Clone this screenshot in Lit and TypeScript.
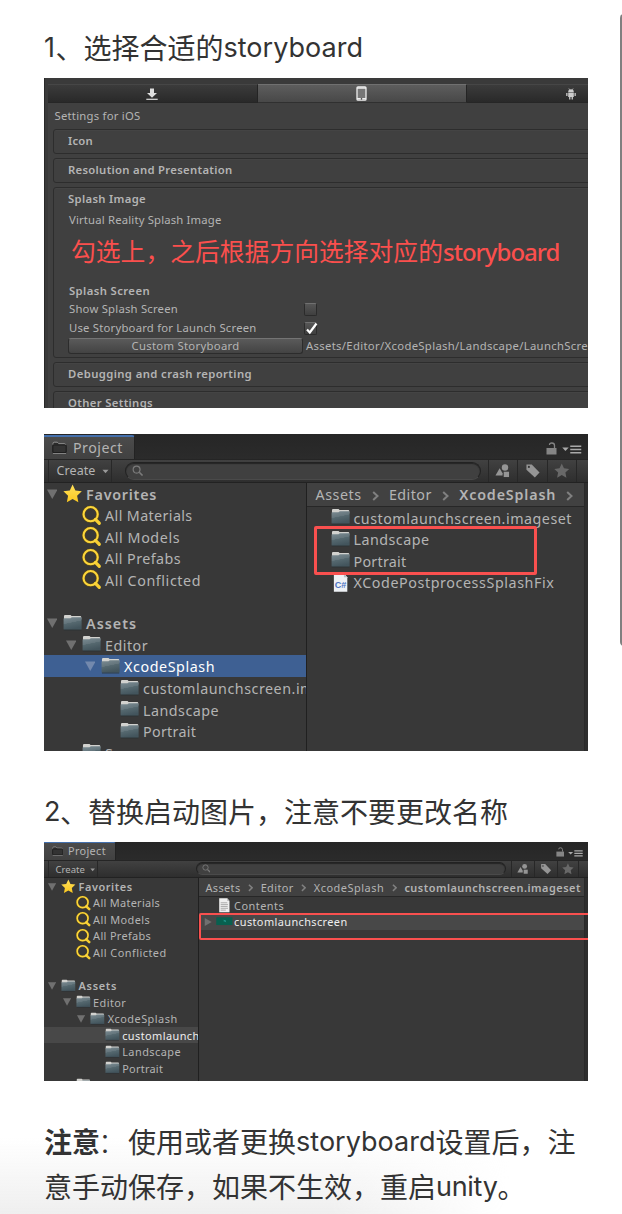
import { LitElement, html, css, nothing } from "lit";
import { customElement, property } from "lit/decorators.js";

/* Text whose letter spacing is adjusted so that it fills a known width. */
@customElement("fit-text")
class FitText extends LitElement {
  @property({ type: Number }) w = 0;
  @property() text = "";
  static styles = css`
    :host { display: inline-block; white-space: nowrap; flex: none; }
    .t { display: inline-block; white-space: pre; }
  `;
  render() {
    return html`<span class="t">${this.text}</span>`;
  }
  updated() {
    const el = this.renderRoot.querySelector(".t") as HTMLElement;
    if (!this.w || !el || this.text.length < 2) return;
    el.style.letterSpacing = "0px";
    const natural = el.getBoundingClientRect().width;
    el.style.letterSpacing = `${(this.w - natural) / this.text.length}px`;
  }
}

const t = (text: string, w: number, cls = "") => html`<fit-text class=${cls} .text=${text} .w=${w + 1}></fit-text>`;

const folder = () => html`<svg class="ico" viewBox="0 0 20 17">
  <defs><linearGradient id="f" x1="0" y1="0" x2="0.3" y2="1"><stop offset="0" stop-color="#7d8d94" /><stop offset="0.5" stop-color="#64757c" /><stop offset="0.52" stop-color="#566970" /><stop offset="1" stop-color="#43555d" /></linearGradient></defs>
  <path d="M1 4V2Q1 .6 2.200.6H7.600Q8.400.6 8.800 1.600H18Q19 1.600 19 2.600V5H1Z" fill="#d2d2cf" />
  <path d="M.6 4.800Q.6 4 1.400 4H7.800L9.200 2.800H18.600Q19.400 2.800 19.400 3.600V15.200Q19.400 16 18.600 16H1.400Q.6 16 .6 15.200Z" fill="url(#f)" />
  <path d="M1 16.300H19" stroke="#293034" stroke-width=".7" />
</svg>`;

const search = () => html`<svg class="ico sq" viewBox="0 0 20 20">
  <circle cx="9" cy="8.500" r="7.400" fill="none" stroke="#6b5310" stroke-width="3.200" />
  <path d="M14 14L18 18" stroke="#f8cf33" stroke-width="3.400" stroke-linecap="round" />
  <circle cx="9" cy="8.500" r="7.400" fill="none" stroke="#fbd63c" stroke-width="2.200" />
</svg>`;

const starPath = "M10 .6L12.900 6.800L19.600 7.600L14.700 12.200L16 19L10 15.600L4 19L5.300 12.200L.4 7.600L7.100 6.800Z";
const star = () => html`<svg class="ico sq" viewBox="0 0 20 20">
  <defs><linearGradient id="s" x1="0" y1="0" x2="0" y2="1"><stop offset="0" stop-color="#ffe05a" /><stop offset="1" stop-color="#fbc820" /></linearGradient></defs>
  <path d=${starPath} fill="url(#s)" />
</svg>`;

const tri = (open: boolean) => html`<svg class="tri" viewBox="0 0 11 11">
  <path d=${open ? "M0 .5H11L5.500 10.500Z" : "M1 0V11L10.500 5.500Z"} fill="currentColor" />
</svg>`;

const csFile = () => html`<svg class="ico sq" viewBox="0 0 20 20">
  <path d="M3 .5H13.500L17 4.500V19.500H3Z" fill="#eef1f5" />
  <path d="M13.500 .5V4.500H17Z" fill="#b9c0c8" />
  <text x="3.800" y="15.200" font-family="Liberation Sans" font-size="9.500" font-weight="700" fill="#4d74c4">C#</text>
</svg>`;

const docFile = () => html`<svg class="ico sq" viewBox="0 0 20 20">
  <path d="M3 .5H14L17 4V19.500H3Z" fill="#efefef" />
  <path d="M14 .5V4H17Z" fill="#b5b5b5" />
  <path d="M5 6.500H14M5 9H15M5 11.500H14.500M5 14H15M5 16.500H12" stroke="#888" stroke-width=".9" />
</svg>`;

const thumb = () => html`<svg class="ico sq" viewBox="0 0 20 20">
  <rect x="-1" y="4.500" width="22" height="10.500" fill="#08604f" />
  <path d="M9 8L12 11M11.500 8.500L10 10" stroke="#2aa7a0" stroke-width="1.200" />
</svg>`;

const icons: Record<string, () => unknown> = { folder, search, star, cs: csFile, doc: docFile, thumb };

interface Row {
  text: string; w: number; icon?: string; level?: number; open?: boolean; closed?: boolean; bold?: boolean; state?: string;
}
interface Project {
  title: number; create: number; tree: Row[]; crumbs: [string, number][]; files: Row[];
}

@customElement("project-window")
class ProjectWindow extends LitElement {
  @property({ attribute: false }) data!: Project;
  static styles = css`
    :host {
      display: block; position: relative; overflow: hidden; background: #383838; color: #b4b4b4;
      font-family: "Noto Sans", "Open Sans", sans-serif; --unit: 10px; font-size: var(--unit);
    }
    svg { display: block; flex: none; }
    .frame { height: 100%; display: flex; flex-direction: column; }
    .head { height: var(--head); flex: none; background: linear-gradient(#262626, #2b2b2b); display: flex; justify-content: space-between; align-items: flex-end; }
    .tab {
      height: calc(var(--head) - var(--tabtop)); width: var(--tabw); box-sizing: border-box; border-top: var(--blue) solid #4470ad;
      border-right: 1px solid #232323; border-radius: 0 .3em 0 0; background: linear-gradient(#4b4b4b, #414141);
      display: flex; align-items: center; padding-left: var(--tabpad); gap: var(--tabgap);
    }
    .tab svg { width: 1.5em; height: 1.3em; margin-top: -.15em; }
    .name { font-size: 1.42em; line-height: 1; }
    .menu { display: flex; align-items: center; gap: .55em; padding: 0 .65em calc(var(--head) * .15) 0; }
    .menu .lock { width: 1.1em; height: 1.3em; }
    .menu .list { width: 1.95em; height: .9em; margin-top: .2em; }
    .tools { height: var(--tools); flex: none; box-sizing: border-box; background: linear-gradient(#414141, #2e2e2e); border-top: 1px solid #252525; border-bottom: 1px solid #222; display: flex; }
    .create { width: var(--createw); margin-left: 4px; border-left: 1px solid #282828; border-right: 1px solid #282828; box-sizing: border-box; display: flex; align-items: center; gap: .6em; padding-left: var(--createpad); }
    .create .lbl { font-size: 1.25em; line-height: 1; padding-top: .14em; }
    .create svg { width: .7em; height: .5em; margin-top: .2em; }
    .field { margin: .15em 0 .2em var(--fieldx); width: var(--fieldw); box-sizing: border-box; border-radius: 2em; background: #404040; border: 1px solid #222; border-bottom-color: #4a4a4a; box-shadow: inset 0 1px 1px #252525; display: flex; align-items: center; padding-left: .6em; }
    .field svg { width: 1.15em; height: 1.15em; }
    .btns { margin-left: .65em; display: flex; }
    .btns span { width: 2.98em; box-sizing: border-box; border-left: 1px solid #272727; display: flex; align-items: center; justify-content: center; }
    .btns span:last-child { border-right: 1px solid #272727; }
    .btns svg { width: 1.55em; height: 1.55em; }
    .body { flex: 1; min-height: 0; display: flex; }
    .tree { width: var(--treew); flex: none; overflow: hidden; border-right: 1px solid #202020; box-sizing: border-box; }
    .row { height: var(--row); display: flex; align-items: center; box-sizing: border-box; overflow: hidden; }
    .tree .row { padding-left: var(--lead); }
    .pad { width: 1.9em; flex: none; }
    .slot { width: 1.66em; flex: none; }
    .tri { width: 1.05em; height: 1.05em; color: #707070; margin-top: .1em; }
    .ico { width: 1.92em; height: 1.72em; margin-right: .38em; margin-top: -.1em; overflow: visible; }
    .sq { height: 1.92em; margin-top: .05em; }
    .text { font-size: 1.43em; line-height: 1; padding-top: .2em; }
    .bold { font-weight: 600; }
    .blue { background: #3e6093; color: #fff; }
    .blue .tri { color: #7389ad; }
    .grey { background: #484848; color: #eee; }
    .side { flex: 1; min-width: 0; margin-right: 3px; border-right: 1px solid #2a2a2a; box-shadow: 3px 0 #2e2e2e; }
    .crumbs { height: var(--crumb); display: flex; align-items: center; gap: var(--cg); padding-left: .85em; box-sizing: border-box; background: #414141; border-bottom: 1px solid #272727; white-space: nowrap; overflow: hidden; }
    .crumbs svg { width: .7em; height: 1em; margin-top: .3em; }
    .side .row { padding-left: var(--fileslead); }
    .side .slot { width: var(--fslot); }
  `;
  row(r: Row) {
    return html`<div class="row ${r.state ?? ""}">
      ${Array.from({ length: r.level ?? 0 }, () => html`<span class="pad"></span>`)}
      <span class="slot">${r.open || r.closed ? tri(!!r.open) : nothing}</span>
      ${icons[r.icon ?? "folder"]()}
      ${t(r.text, r.w, r.bold ? "text bold" : "text")}
    </div>`;
  }
  chev() {
    return html`<svg viewBox="0 0 7 10"><path d="M1.200 1L5.500 5L1.200 9" fill="none" stroke="#808080" stroke-width="2" /></svg>`;
  }
  render() {
    const d = this.data;
    const last = d.crumbs.length - 1;
    return html`<div class="frame">
      <div class="head">
        <div class="tab">
          <svg viewBox="0 0 15 13"><path d="M1 3.500V2.500Q1 1.200 2.200 1.200H5.300L6.800 2.700H12Q13.800 2.700 13.800 4" fill="#2a2a2a" stroke="#929292" stroke-width="1" /><rect x=".8" y="4" width="13.400" height="7.600" rx="1" fill="#333" stroke="#1e1e1e" stroke-width="1.200" /><path d="M1 12.500H14" stroke="#8b8b8b" stroke-width=".9" /></svg>
          ${t("Project", d.title, "name")}
        </div>
        <div class="menu">
          <svg class="lock" viewBox="0 0 11 13"><rect x=".5" y="6" width="10" height="6.500" fill="#858585" /><path d="M3.500 3Q3.500 1 5.800 1Q8.500 1 8.500 3.500V6" fill="none" stroke="#858585" stroke-width="1.300" /></svg>
          <svg class="list" viewBox="0 0 19 9"><path d="M0 2.500H6.500L3.200 6Z" fill="#aaa" /><path d="M8 1.200H19M8 4.500H19M8 7.800H19" stroke="#aaa" stroke-width="1.600" /></svg>
        </div>
      </div>
      <div class="tools">
        <div class="create">${t("Create", d.create, "lbl")}<svg viewBox="0 0 7 5"><path d="M.5 .8H6.500L3.500 4.300Z" fill="#999" /></svg></div>
        <div class="field"><svg viewBox="0 0 12 12"><circle cx="4.800" cy="4.800" r="3.600" fill="none" stroke="#7a7a7a" stroke-width="1.200" /><path d="M7.600 7.600L11 11" stroke="#7a7a7a" stroke-width="1.700" /></svg></div>
        <div class="btns">
          <span><svg viewBox="0 0 16 16"><circle cx="10.300" cy="4.600" r="3.300" fill="#959595" /><path d="M.5 13L4.800 5.500L7.800 10.500V13Z" fill="#959595" /><rect x="9" y="9" width="5.500" height="5.500" fill="#959595" /></svg></span>
          <span><svg viewBox="0 0 16 16"><path d="M1.500 1.500H7L15 9.800L10.200 15L1.500 7Z" fill="#959595" /><circle cx="4" cy="4" r="1.100" fill="#363636" /></svg></span>
          <span><svg viewBox="0 0 20 20"><path d=${starPath} fill="#686868" /></svg></span>
        </div>
      </div>
      <div class="body">
        <div class="tree">${d.tree.map((r) => (r.text ? this.row(r) : html`<div class="row"></div>`))}</div>
        <div class="side">
          <div class="crumbs">
            ${d.crumbs.map(([text, w], i) => html`${i ? this.chev() : nothing}${t(text, w, i === last ? "text bold" : "text")}`)}
            ${last < 3 ? this.chev() : nothing}
          </div>
          ${d.files.map((r) => this.row(r))}
        </div>
      </div>
    </div>`;
  }
}

const first: Project = {
  title: 49, create: 38,
  tree: [
    { text: "Favorites", w: 70, icon: "star", open: true, bold: true },
    { text: "All Materials", w: 86.5, icon: "search", level: 1 },
    { text: "All Models", w: 74, icon: "search", level: 1 },
    { text: "All Prefabs", w: 75, icon: "search", level: 1 },
    { text: "All Conflicted", w: 95, icon: "search", level: 1 },
    { text: "", w: 0 },
    { text: "Assets", w: 50, open: true, bold: true },
    { text: "Editor", w: 42, level: 1, open: true },
    { text: "XcodeSplash", w: 90, level: 2, open: true, state: "blue" },
    { text: "customlaunchscreen.imageset", w: 218, level: 3 },
    { text: "Landscape", w: 75, level: 3 },
    { text: "Portrait", w: 52, level: 3 },
    { text: "Scenes", w: 48, level: 1 },
  ],
  crumbs: [["Assets", 45], ["Editor", 42], ["XcodeSplash", 96]],
  files: [
    { text: "customlaunchscreen.imageset", w: 217.5 },
    { text: "Landscape", w: 75 },
    { text: "Portrait", w: 52 },
    { text: "XCodePostprocessSplashFix", w: 200, icon: "cs" },
  ],
};

const second: Project = {
  title: 37, create: 28.5,
  tree: [
    { text: "Favorites", w: 53, icon: "star", open: true, bold: true },
    { text: "All Materials", w: 66, icon: "search", level: 1 },
    { text: "All Models", w: 56, icon: "search", level: 1 },
    { text: "All Prefabs", w: 57, icon: "search", level: 1 },
    { text: "All Conflicted", w: 72.5, icon: "search", level: 1 },
    { text: "", w: 0 },
    { text: "Assets", w: 37.5, open: true, bold: true },
    { text: "Editor", w: 32, level: 1, open: true },
    { text: "XcodeSplash", w: 69, level: 2, open: true },
    { text: "customlaunchscreen.imageset", w: 167, level: 3, state: "grey" },
    { text: "Landscape", w: 58, level: 3 },
    { text: "Portrait", w: 40, level: 3 },
    { text: "Scenes", w: 36, level: 1 },
  ],
  crumbs: [["Assets", 34], ["Editor", 32], ["XcodeSplash", 69.5], ["customlaunchscreen.imageset", 175.5]],
  files: [
    { text: "Contents", w: 49, icon: "doc" },
    { text: "customlaunchscreen", w: 112.5, icon: "thumb", closed: true, state: "grey" },
  ],
};

@customElement("settings-window")
class SettingsWindow extends LitElement {
  static styles = css`
    :host { display: block; overflow: hidden; background: #3a3a3a; color: #b4b4b4; font: 11.3px/14px "Noto Sans", "Open Sans", sans-serif; box-sizing: border-box; border-left: 1px solid #292929; padding: 6px 0 0 3px; }
    svg { display: block; }
    .sheet { background: #404040; height: 324px; }
    .tabs { display: flex; height: 19px; }
    .tab { flex: none; width: 209.500px; box-sizing: border-box; display: flex; align-items: center; justify-content: center; background: linear-gradient(#3b3b3b, #292929); border-top: 1px solid #464646; border-bottom: 1px solid #262626; border-right: 1px solid #242424; }
    .on { background: linear-gradient(#5d5d5d, #484848); border-top-color: #707070; border-bottom-color: #303030; }
    .caption { height: 26px; padding: 6px 0 0 6.500px; box-sizing: border-box; }
    .box { margin: 0 -6px 4px 5px; border: 1px solid #2d2d2d; border-radius: 3px; height: 25px; box-sizing: border-box; padding: 4px 0 0 14px; box-shadow: inset 0 1px #444; }
    .tall { height: 171px; }
    .b { font-weight: 600; }
    .line { display: flex; align-items: center; }
    .big { color: #fb4f4d; font: 24.800px/36px "Noto Sans CJK SC", sans-serif; height: 36px; margin: 5px 0 0 3px; white-space: nowrap; display: flex; }
    .lat { font-family: "Noto Sans", sans-serif; font-size: 24px; font-weight: 500; padding-top: 2px; }
    .l1 { margin: 7px 0 0 1px; }
    .l2 { margin: 15.500px 0 0 1px; }
    .l3 { height: 18.700px; padding-left: 1px; padding-top: 4px; box-sizing: border-box; }
    .check { width: 13px; height: 13px; box-sizing: border-box; border: 1px solid #2b2b2b; border-top-color: #707070; border-radius: 2px; background: linear-gradient(#565656, #3f3f3f); margin-top: 2px; }
    .check svg { margin: -1px 0 0 -1px; width: 15px; height: 13px; overflow: visible; }
    .lab { width: 235px; flex: none; }
    .l4 { margin-top: 3px; }
    .btn { width: 235px; height: 16px; flex: none; box-sizing: border-box; border: 1px solid #2c2c2c; border-top-color: #747474; border-radius: 3px; background: linear-gradient(#5a5a5a, #434343); line-height: 13px; text-align: center; margin-right: 3px; }
    .after { white-space: nowrap; }
  `;
  render() {
    return html`<div class="sheet">
      <div class="tabs">
        <div class="tab"><svg width="12" height="12" viewBox="0 0 12 12"><path d="M4 .5H8V5H11L6 9.800L1 5H4Z" fill="#ddd" /><path d="M.3 11.300H11.700" stroke="#ddd" stroke-width="1.200" /></svg></div>
        <div class="tab on"><svg width="11" height="15" viewBox="0 0 11 15"><rect x="1" y=".8" width="9" height="13.400" rx="1" fill="#777" stroke="#eee" stroke-width="1.300" /><path d="M1 2H10M1 12.800H10" stroke="#eee" stroke-width="1.600" /><circle cx="5.500" cy="12.900" r=".8" fill="#444" /></svg></div>
        <div class="tab"><svg width="10" height="12" viewBox="0 0 10 12"><path d="M2.200 4Q2.200 1.300 5 1.300Q7.800 1.300 7.800 4ZM2.200 4.600H7.800V9H2.200ZM.2 5H1.500V8H.2ZM8.500 5H9.800V8H8.500ZM3.100 9H4.400V11.500H3.100ZM5.600 9H6.900V11.500H5.600Z" fill="#ccc" /><path d="M2.800.4L3.700 2M7.200.4L6.300 2" stroke="#ccc" stroke-width=".6" /></svg></div>
      </div>
      <div class="caption">${t("Settings for iOS", 85)}</div>
      <div class="box b">${t("Icon", 24)}</div>
      <div class="box b">${t("Resolution and Presentation", 163.5)}</div>
      <div class="box tall">
        <div class="line b">${t("Splash Image", 77)}</div>
        <div class="line l1">${t("Virtual Reality Splash Image", 151.5)}</div>
        <div class="big"><span>勾选上，之后根据方向选择对应的</span>${t("storyboard", 115.5, "lat")}</div>
        <div class="line b l2">${t("Splash Screen", 80)}</div>
        <div class="line l3"><span class="lab">${t("Show Splash Screen", 108)}</span><span class="check"></span></div>
        <div class="line l3"><span class="lab">${t("Use Storyboard for Launch Screen", 186.5)}</span><span class="check"><svg viewBox="0 0 15 13"><path d="M3 7.500L5.800 10.500L12.500 1.500" fill="none" stroke="#fff" stroke-width="2.200" /></svg></span></div>
        <div class="line l4"><span class="btn">${t("Custom Storyboard", 107)}</span><span class="after">${t("Assets/Editor/XcodeSplash/Landscape/LaunchScre", 281)}</span></div>
      </div>
      <div class="box b">${t("Debugging and crash reporting", 183)}</div>
      <div class="box b">${t("Other Settings", 84)}</div>
    </div>`;
  }
}

@customElement("app-root")
class AppRoot extends LitElement {
  static styles = css`
    :host { display: block; }
    .page { position: relative; width: 622px; height: 1214px; overflow: hidden; box-sizing: border-box; padding: 0 34px 0 44px; background: #fff; color: #333; font: 28px/44px "Noto Sans CJK SC", sans-serif; }
    .shade { position: absolute; left: 0; bottom: 0; width: 560px; height: 76px; background: linear-gradient(rgba(238, 238, 238, 0), #efefef); -webkit-mask-image: linear-gradient(100deg, #000 60%, transparent 90%); mask-image: linear-gradient(100deg, #000 60%, transparent 90%); }
    .scroll { position: absolute; left: 620px; top: 14px; width: 8px; height: 632px; border-radius: 4px; background: #808080; }
    .h { display: flex; box-sizing: border-box; white-space: nowrap; }
    .h1 { height: 78px; padding-top: 25px; }
    .h2 { height: 91px; padding-top: 38px; }
    .lat { font-family: Inter, "Noto Sans", sans-serif; font-size: 27px; padding-top: 1px; }
    .thin { font-weight: 300; margin: 0 2px 0 -2px; }
    .one { width: 11.500px; flex: none; }
    .two { width: 16px; flex: none; }
    settings-window { height: 330px; }
    .gap { margin-top: 26px; }
    .p2 { height: 317px; --head: 25px; --tabtop: 1px; --blue: 2px; --tabw: 91px; --tabpad: 8px; --tabgap: 6px; --tools: 23.500px; --createw: 64px; --createpad: 7.500px; --fieldx: 13px; --fieldw: 356px; --treew: 263px; --row: 21.600px; --lead: 2.500px; --crumb: 24px; --cg: 10.200px; --fileslead: 8px; --fslot: 15.500px; }
    .p3 { height: 239px; --unit: 7.650px; --head: 18px; --tabtop: 0px; --blue: 1.500px; --tabw: 72px; --tabpad: 8px; --tabgap: 4.500px; --tools: 18px; --createw: 50px; --createpad: 6.500px; --fieldx: 98px; --fieldw: 310px; --treew: 155px; --row: 16.540px; --lead: 4.300px; --crumb: 18.800px; --cg: 7.400px; --fileslead: 5px; --fslot: 12.500px; }
    .wrap { position: relative; overflow: hidden; }
    .mark { position: absolute; box-sizing: border-box; border: 2.500px solid #f9504f; border-radius: 2px; }
    .m2 { left: 270px; top: 92px; width: 223px; height: 49px; border-width: 3px; }
    .m3 { left: 155px; top: 71px; width: 400px; height: 27px; border-width: 2px; }
    .note { position: relative; padding-top: 38px; }
  `;
  render() {
    return html`<div class="page">
      <div class="shade"></div>
      <div class="h h1"><span class="lat one">1</span><span>、选择合适的</span>${t("storyboard", 138.5, "lat")}</div>
      <settings-window></settings-window>
      <div class="wrap gap"><project-window class="p2" .data=${first}></project-window><div class="mark m2"></div></div>
      <div class="h h2"><span class="lat two">2</span><span>、替换启动图片，注意不要更改名称</span></div>
      <div class="wrap"><project-window class="p3" .data=${second}></project-window><div class="mark m3"></div></div>
      <div class="note">
        <div class="h"><b>注意</b><span class="thin">：</span><span>使用或者更换</span>${t("storyboard", 138.5, "lat")}<span>设置后，注</span></div>
        <div class="h"><span>意手动保存，如果不生效，重启</span>${t("unity", 60.5, "lat")}<span>。</span></div>
      </div>
      <div class="scroll"></div>
    </div>`;
  }
}
